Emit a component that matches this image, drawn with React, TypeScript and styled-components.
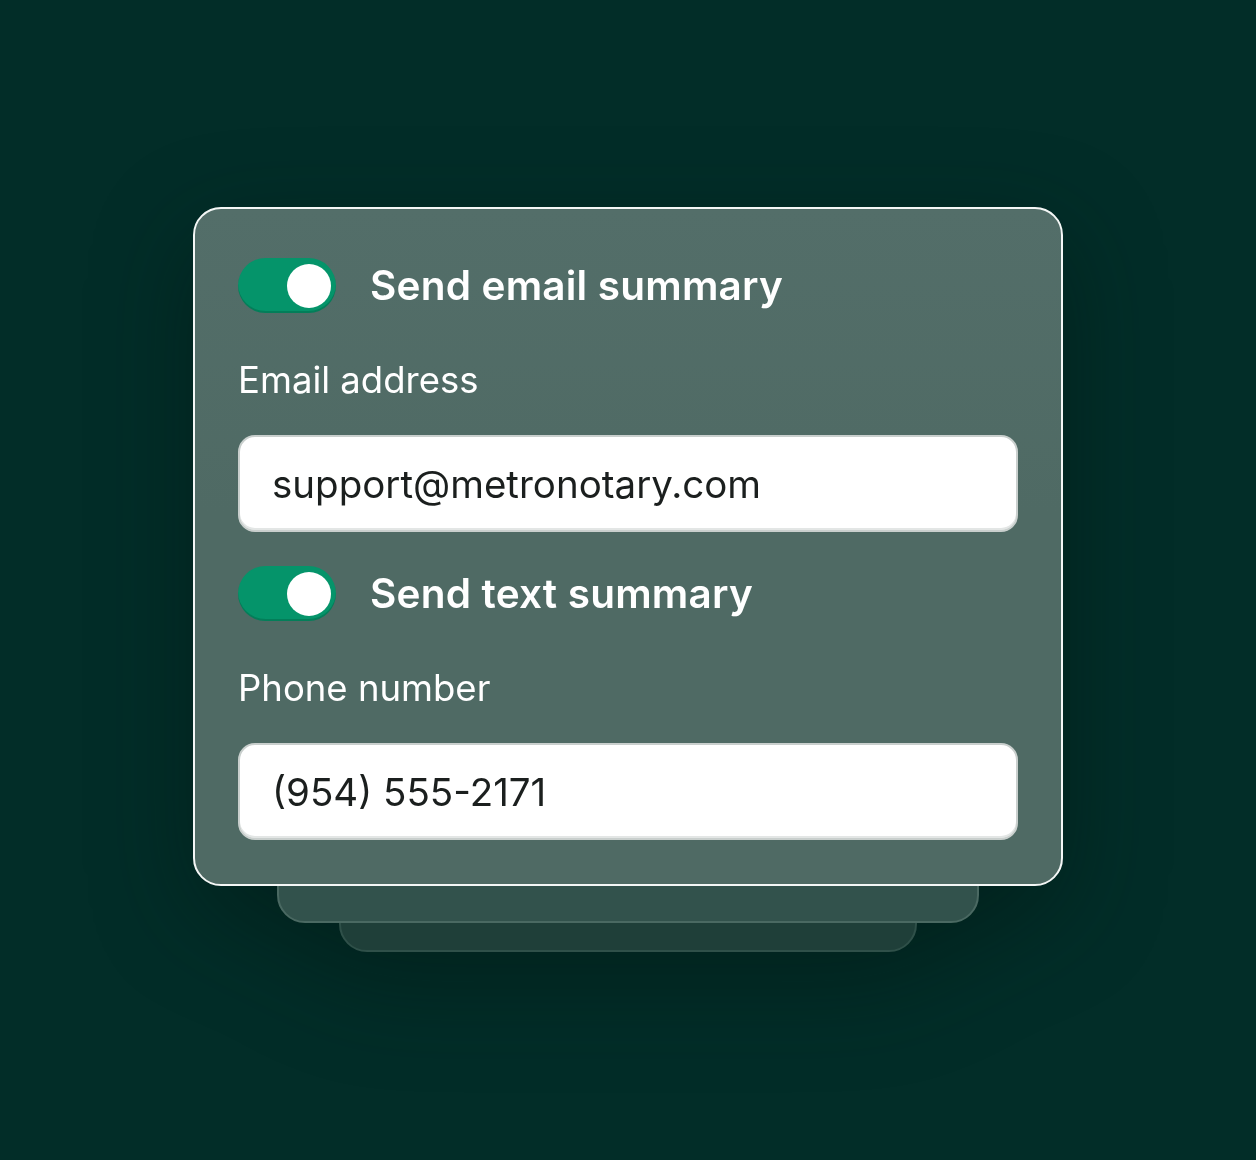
import styled, { createGlobalStyle } from "styled-components";

const GlobalStyle = createGlobalStyle`
  html, body {
    margin: 0;
    padding: 0;
    background: #022d28;
  }
  body {
    font-family: Inter, "Noto Sans", "Liberation Sans", sans-serif;
    -webkit-font-smoothing: antialiased;
  }
`;

const Page = styled.main`
  height: 1160px;
  display: flex;
  justify-content: center;
  padding-top: 207px;
  box-sizing: border-box;
`;

const Stack = styled.div`
  position: relative;
  width: 870px;
  height: 679px;
  filter: drop-shadow(0 30px 50px rgba(0, 18, 12, 0.4));
`;

const Layer = styled.div<{ $inset: number; $drop: number; $bg: string; $edge: string }>`
  position: absolute;
  left: ${(p) => p.$inset}px;
  right: ${(p) => p.$inset}px;
  top: 40px;
  bottom: -${(p) => p.$drop}px;
  border-radius: 28px;
  background: ${(p) => p.$bg};
  border: 2px solid ${(p) => p.$edge};
`;

const Card = styled.section`
  position: relative;
  box-sizing: border-box;
  height: 100%;
  border-radius: 28px;
  border: 2px solid #f4f7f6;
  background: linear-gradient(180deg, #536e69 0%, #4f6a64 45%, #4f6a64 100%);
  padding: 49px 43px 43px;
  display: flex;
  flex-direction: column;
  gap: 34px;
`;

const Section = styled.div`
  display: flex;
  flex-direction: column;
`;

const ToggleRow = styled.div`
  display: flex;
  align-items: center;
  gap: 34px;
  height: 55px;
`;

const Switch = styled.div<{ $on: boolean }>`
  width: 98px;
  height: 55px;
  border-radius: 28px;
  box-sizing: border-box;
  background: ${(p) => (p.$on ? "#05946a" : "#8a9a96")};
  box-shadow: inset 0 -2px 0 rgba(0, 60, 40, 0.25);
  display: flex;
  align-items: center;
  justify-content: ${(p) => (p.$on ? "flex-end" : "flex-start")};
  padding: 0 5px;
`;

const Knob = styled.span`
  width: 44px;
  height: 44px;
  border-radius: 50%;
  background: #ffffff;
`;

const Title = styled.h2`
  margin: 0;
  font-size: 40.5px;
  font-weight: 600;
  color: #ffffff;
  letter-spacing: 0.2px;
`;

const Label = styled.label`
  display: block;
  margin: 45px 0 33px;
  font-size: 36.5px;
  line-height: 44px;
  font-weight: 400;
  color: #ffffff;
`;

const Field = styled.div`
  box-sizing: border-box;
  height: 97px;
  border-radius: 17px;
  background: #ffffff;
  border: 2px solid #c9cfcd;
  box-shadow: inset 0 -2px 0 #e3e6e5;
  display: flex;
  align-items: center;
  padding: 0 32px;
  font-size: 38.5px;
  color: #1b1f1e;
`;

const settings = [
  { title: "Send email summary", label: "Email address", value: "support@metronotary.com" },
  { title: "Send text summary", label: "Phone number", value: "(954) 555-2171" },
];

export default function App() {
  return (
    <>
      <GlobalStyle />
      <Page>
        <Stack>
          <Layer $inset={146} $drop={66} $bg="#1f3f39" $edge="#2f5049" />
          <Layer $inset={84} $drop={37} $bg="#32524c" $edge="#4a6962" />
          <Card>
            {settings.map((s) => (
              <Section key={s.title}>
                <ToggleRow>
                  <Switch $on>
                    <Knob />
                  </Switch>
                  <Title>{s.title}</Title>
                </ToggleRow>
                <Label>{s.label}</Label>
                <Field>{s.value}</Field>
              </Section>
            ))}
          </Card>
        </Stack>
      </Page>
    </>
  );
}
